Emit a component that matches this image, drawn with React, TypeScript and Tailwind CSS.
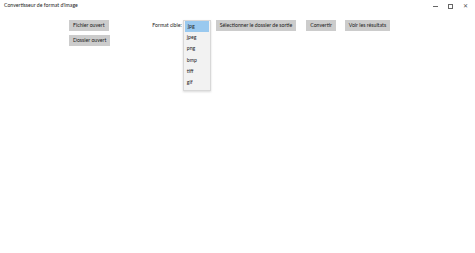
import React from "react";

const formats = ["jpg", "jpeg", "png", "bmp", "tiff", "gif"];

const Btn: React.FC<{ label: string; className?: string }> = ({ label, className }) => (
  <button className={`h-[11px] px-[4px] bg-[#cccccc] text-[5.2px] leading-[11px] text-[#1a1a1a] ${className ?? ""}`}>
    {label}
  </button>
);

export default function App() {
  return (
    <div className="w-[475px] h-[253px] bg-white font-['Lato',sans-serif] text-black">
      <div className="flex h-[12px] items-center justify-between pl-[4px] pr-[7px]">
        <span className="text-[5.2px] text-[#222]">Convertisseur de format d'image</span>
        <div className="flex items-center gap-[10px] text-[#555]">
          <span className="block h-[0.5px] w-[5px] bg-[#666]" />
          <span className="block h-[5px] w-[5px] border-[0.5px] border-[#666]" />
          <span className="text-[6px] leading-none">✕</span>
        </div>
      </div>
      <div className="flex items-start pt-[8px] pl-[69px]">
        <div className="flex flex-col items-start gap-[4px]">
          <Btn label="Fichier ouvert" className="px-[3px]" />
          <Btn label="Dossier ouvert" />
        </div>
        <div className="ml-[42px] flex items-start">
          <span className="mr-[1px] text-[5.2px] leading-[11px] text-[#222]">Format cible:</span>
          <div className="flex w-[28px] flex-col border-[0.5px] border-[#d8d8d8] bg-[#f2f2f2] pb-[2px] shadow-[0_1px_2px_rgba(0,0,0,0.15)]">
            {formats.map((f, i) => (
              <div
                key={f}
                className={`h-[11.2px] pl-[3px] text-[5.2px] leading-[11.2px] text-[#222] ${i === 0 ? "bg-[#99c9ef] mx-[1px] pl-[2px]" : ""}`}
              >
                {f}
              </div>
            ))}
          </div>
          <Btn label="Sélectionner le dossier de sortie" className="ml-[5px]" />
          <Btn label="Convertir" className="ml-[10px]" />
          <Btn label="Voir les résultats" className="ml-[9px]" />
        </div>
      </div>
    </div>
  );
}
